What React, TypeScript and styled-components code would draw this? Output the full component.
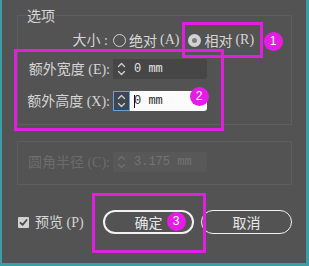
import React from 'react';
import styled, { createGlobalStyle } from 'styled-components';

const Global = createGlobalStyle`
  html, body { margin: 0; padding: 0; background: #535353; }
  * { box-sizing: border-box; }
`;

const Frame = styled.div`
  position: relative;
  width: 309px;
  height: 266px;
  background: #535353;
  border-left: 2px solid #3a9ea8;
  border-right: 3px solid #3a9ea8;
  border-bottom: 3px solid #3a9ea8;
  padding: 0 14px 0 15px;
  font-family: "Noto Sans CJK SC", sans-serif;
  font-size: 14px;
  color: #d6d6d6;
  display: flex;
  flex-direction: column;
`;

const Group = styled.fieldset<{ $top: number; $padTop: number; $padBottom: number }>`
  margin: ${p => p.$top}px 0 0;
  padding: ${p => p.$padTop}px 0 ${p => p.$padBottom}px;
  border: 1px solid #5e5e5e;
  min-width: 0;
  display: flex;
  flex-direction: column;
`;

const Legend = styled.legend`
  margin-left: 8px;
  padding: 0 1px;
  line-height: 16px;
  font-size: 14px;
  color: #d6d6d6;
`;

const Row = styled.div<{ $mt?: number }>`
  display: flex;
  align-items: center;
  height: 20px;
  margin-top: ${p => p.$mt ?? 0}px;
`;

const Label = styled.span<{ $w: number; $mr: number; $dim?: boolean }>`
  width: ${p => p.$w}px;
  margin-right: ${p => p.$mr}px;
  text-align: right;
  white-space: nowrap;
  line-height: 20px;
  color: ${p => (p.$dim ? '#6c6c6c' : '#d6d6d6')};
`;

const Latin = styled.span`
  font-family: "Liberation Serif", serif;
`;

const RadioOption = styled.label<{ $ml?: number }>`
  display: flex;
  align-items: center;
  gap: 3px;
  margin-left: ${p => p.$ml ?? 0}px;
  line-height: 20px;
  white-space: nowrap;
`;

const RadioDot = styled.span<{ $on?: boolean }>`
  width: 13px;
  height: 13px;
  border-radius: 50%;
  flex: none;
  border: ${p => (p.$on ? '4px solid #d2d2d2' : '1.5px solid #d2d2d2')};
  background: ${p => (p.$on ? '#7c7c7c' : 'transparent')};
`;

const Field = styled.div`
  display: flex;
  height: 20px;
`;

const SpinBox = styled.span<{ $focus?: boolean; $dim?: boolean }>`
  width: 17px;
  height: 20px;
  display: flex;
  align-items: center;
  justify-content: center;
  background: ${p => (p.$focus ? '#3e4652' : p.$dim ? '#585858' : '#464646')};
  border: 1px solid ${p => (p.$focus ? '#6b9fdc' : 'transparent')};
  color: ${p => (p.$dim ? '#6e6e6e' : '#d0d0d0')};
`;

const Input = styled.span<{ $focus?: boolean; $dim?: boolean }>`
  width: 77px;
  height: 20px;
  display: flex;
  align-items: center;
  padding-left: 4px;
  border-radius: 0 3px 3px 0;
  font-family: "Liberation Mono", monospace;
  font-size: 12px;
  white-space: pre;
  background: ${p => (p.$focus ? '#fbfbfb' : p.$dim ? '#585858' : '#464646')};
  color: ${p => (p.$focus ? '#2a2a2a' : p.$dim ? '#747474' : '#e4e4e4')};
`;

const Caret = styled.span`
  width: 1px;
  height: 13px;
  background: #111;
  margin-right: -1px;
`;

const Footer = styled.div`
  display: flex;
  align-items: center;
  height: 24px;
  margin-top: 25px;
  padding-left: 1px;
`;

const Check = styled.span`
  width: 11px;
  height: 11px;
  border-radius: 1px;
  background: #d2d2d2;
  display: flex;
  align-items: center;
  justify-content: center;
  flex: none;
`;

const CheckLabel = styled.span`
  margin-left: 6px;
  line-height: 20px;
  white-space: nowrap;
`;

const Spacer = styled.span`
  flex: 1;
`;

const Buttons = styled.div`
  display: flex;
  gap: 7px;
`;

const Button = styled.button<{ $primary?: boolean }>`
  width: 91px;
  height: 24px;
  border-radius: 12px;
  border: ${p => (p.$primary ? '2px' : '1.5px')} solid #f2f2f2;
  background: transparent;
  color: #e8e8e8;
  font-family: inherit;
  font-size: 14px;
  line-height: 18px;
  padding: 0;
`;

const Mark = styled.div<{ $x: number; $y: number; $w: number; $h: number }>`
  position: absolute;
  left: ${p => p.$x}px;
  top: ${p => p.$y}px;
  width: ${p => p.$w}px;
  height: ${p => p.$h}px;
  border: 3px solid #e020e0;
  pointer-events: none;
`;

const Badge = styled.div<{ $x: number; $y: number }>`
  position: absolute;
  left: ${p => p.$x}px;
  top: ${p => p.$y}px;
  width: 19px;
  height: 19px;
  border-radius: 50%;
  background: #e41ce4;
  color: #fff;
  font-family: "Liberation Sans", sans-serif;
  font-size: 12px;
  line-height: 19px;
  text-align: center;
`;

const Chevrons: React.FC = () => (
  <svg width="9" height="16" viewBox="0 0 9 16" fill="none" stroke="currentColor" strokeWidth="1.3" strokeLinecap="round" strokeLinejoin="round">
    <path d="M1.5 5.5 L4.5 2.5 L7.5 5.5" />
    <path d="M1.5 10.5 L4.5 13.5 L7.5 10.5" />
  </svg>
);

const Tick: React.FC = () => (
  <svg width="9" height="9" viewBox="0 0 9 9" fill="none" stroke="#4a4a4a" strokeWidth="1.8" strokeLinecap="round" strokeLinejoin="round">
    <path d="M1.5 4.8 L3.6 6.9 L7.6 2" />
  </svg>
);

export default function App() {
  return (
    <>
      <Global />
      <Frame>
        <Group $top={7} $padTop={7} $padBottom={13}>
          <Legend>选项</Legend>
          <Row>
            <Label $w={90} $mr={5}>
              大小<Latin> :</Latin>
            </Label>
            <RadioOption>
              <RadioDot />
              绝对<Latin> (A)</Latin>
            </RadioOption>
            <RadioOption $ml={9}>
              <RadioDot $on />
              相对<Latin> (R)</Latin>
            </RadioOption>
          </Row>
          <Row $mt={9}>
            <Label $w={92} $mr={3}>
              额外宽度<Latin> (E):</Latin>
            </Label>
            <Field>
              <SpinBox>
                <Chevrons />
              </SpinBox>
              <Input>0 mm</Input>
            </Field>
          </Row>
          <Row $mt={12}>
            <Label $w={92} $mr={3}>
              额外高度<Latin> (X):</Latin>
            </Label>
            <Field>
              <SpinBox $focus>
                <Chevrons />
              </SpinBox>
              <Input $focus>
                <Caret />0 mm
              </Input>
            </Field>
          </Row>
        </Group>
        <Group $top={16} $padTop={10} $padBottom={12}>
          <Row>
            <Label $w={92} $mr={3} $dim>
              圆角半径<Latin> (C):</Latin>
            </Label>
            <Field>
              <SpinBox $dim>
                <Chevrons />
              </SpinBox>
              <Input $dim>3.175 mm</Input>
            </Field>
          </Row>
        </Group>
        <Footer>
          <Check>
            <Tick />
          </Check>
          <CheckLabel>
            预览<Latin> (P)</Latin>
          </CheckLabel>
          <Spacer />
          <Buttons>
            <Button $primary>确定</Button>
            <Button>取消</Button>
          </Buttons>
        </Footer>

        <Mark $x={180} $y={22} $w={81} $h={36} />
        <Mark $x={12} $y={49} $w={210} $h={82} />
        <Mark $x={90} $y={193} $w={114} $h={60} />
        <Badge $x={261.5} $y={31.5}>1</Badge>
        <Badge $x={187.5} $y={86.5}>2</Badge>
        <Badge $x={164.5} $y={211.5}>3</Badge>
      </Frame>
    </>
  );
}
